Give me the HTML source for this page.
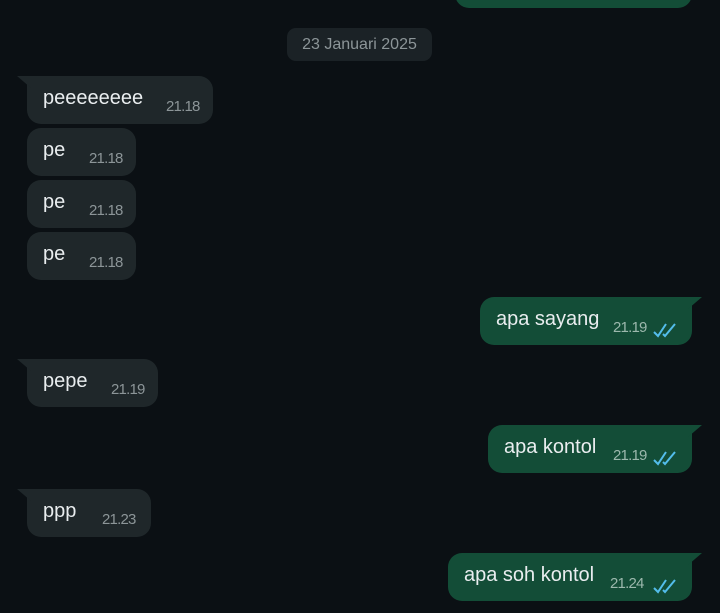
<!DOCTYPE html>
<html><head><style>
body{margin:0;width:720px;height:613px;overflow:hidden;background:#0b1014;font-family:"Liberation Sans",sans-serif;position:relative}
.b{position:absolute;height:48px;border-radius:14px;color:#e9edef;font-size:20px;box-sizing:border-box}
.in{background:#1f272a}
.out{background:#134d37}
.t{position:absolute;left:16px;top:11px}
.tm{position:absolute;top:22px;font-size:15px;color:#8c9598;letter-spacing:-0.8px}
.out .tm{color:#9cb8ad}
.tl{position:absolute;top:0;left:-10px;width:0;height:0;border-top:12px solid #1f272a;border-left:14px solid transparent}
.tr{position:absolute;top:0;right:-10px;width:0;height:0;border-top:12px solid #134d37;border-right:14px solid transparent}
.in.f{border-top-left-radius:0}
.out.f{border-top-right-radius:0}
svg{position:absolute;top:25px}
</style></head><body>
<div class="b out" style="left:455px;top:-40px;width:237px;"></div>
<div style="position:absolute;left:287px;top:28px;width:145px;height:33px;border-radius:9px;background:#1b2226;color:#8c9598;font-size:16px;text-align:center;line-height:33px">23 Januari 2025</div>

<div class="b in f" style="left:27px;top:76px;width:186px"><div class="tl"></div><span class="t">peeeeeeee</span><span class="tm" style="left:139px">21.18</span></div>
<div class="b in" style="left:27px;top:128px;width:109px"><span class="t">pe</span><span class="tm" style="left:62px">21.18</span></div>
<div class="b in" style="left:27px;top:180px;width:109px"><span class="t">pe</span><span class="tm" style="left:62px">21.18</span></div>
<div class="b in" style="left:27px;top:232px;width:109px"><span class="t">pe</span><span class="tm" style="left:62px">21.18</span></div>

<div class="b out f" style="left:480px;top:297px;width:212px"><div class="tr"></div><span class="t">apa sayang</span><span class="tm" style="left:133px">21.19</span>
<svg width="28" height="16" viewBox="0 0 28 16" style="left:172px"><path d="M2 10l4 4L14 2M11 12l2 2L23 2" fill="none" stroke="#53bdeb" stroke-width="2"/></svg></div>

<div class="b in f" style="left:27px;top:359px;width:131px"><div class="tl"></div><span class="t">pepe</span><span class="tm" style="left:84px">21.19</span></div>

<div class="b out f" style="left:488px;top:425px;width:204px"><div class="tr"></div><span class="t">apa kontol</span><span class="tm" style="left:125px">21.19</span>
<svg width="28" height="16" viewBox="0 0 28 16" style="left:164px"><path d="M2 10l4 4L14 2M11 12l2 2L23 2" fill="none" stroke="#53bdeb" stroke-width="2"/></svg></div>

<div class="b in f" style="left:27px;top:489px;width:124px"><div class="tl"></div><span class="t">ppp</span><span class="tm" style="left:75px">21.23</span></div>

<div class="b out f" style="left:448px;top:553px;width:244px"><div class="tr"></div><span class="t">apa soh kontol</span><span class="tm" style="left:162px">21.24</span>
<svg width="28" height="16" viewBox="0 0 28 16" style="left:204px"><path d="M2 10l4 4L14 2M11 12l2 2L23 2" fill="none" stroke="#53bdeb" stroke-width="2"/></svg></div>
</body></html>
